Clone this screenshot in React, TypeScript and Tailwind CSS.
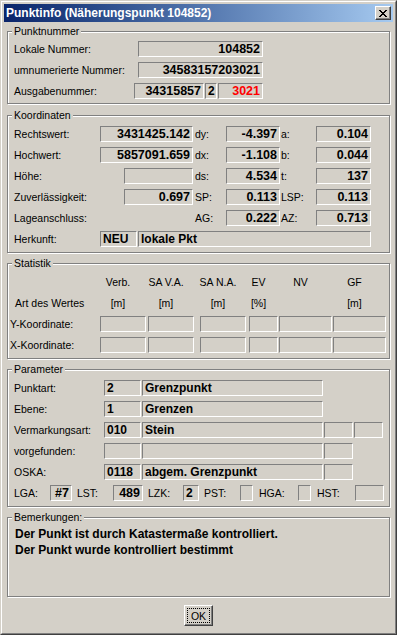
import type { ReactNode } from "react"

const sunken = "border border-t-[#808080] border-l-[#808080] border-r-white border-b-white"

const Field = ({
  className = "",
  children,
  right = false,
  red = false,
}: {
  className?: string
  children?: ReactNode
  right?: boolean
  red?: boolean
}) => (
  <div
    className={`flex h-[16px] shrink-0 items-center overflow-hidden whitespace-nowrap font-bold leading-[14px] ${sunken} ${
      right ? "justify-end pr-[2px] text-[12.5px]" : "pl-[2px] text-[12px]"
    } ${red ? "text-[#ff0000]" : "text-black"} ${className}`}
  >
    {children}
  </div>
)

const Label = ({ className = "", children }: { className?: string; children?: ReactNode }) => (
  <span className={`shrink-0 whitespace-nowrap leading-[14px] ${className}`}>{children}</span>
)

const Row = ({ children }: { children: ReactNode }) => <div className="flex h-[16px] items-center">{children}</div>

const Group = ({ title, className, children }: { title: string; className: string; children?: ReactNode }) => (
  <div
    className={`relative ml-[3px] w-[383px] shrink-0 border border-[#808080] shadow-[inset_1px_1px_0_#fff,1px_1px_0_#fff] ${className}`}
  >
    <span className="absolute left-[4px] top-[-7px] bg-[#d4d0c8] px-[2px] leading-[13px]">{title}</span>
    {children}
  </div>
)

const CloseGlyph = () => (
  <svg width="8" height="7" viewBox="0 0 8 7" shapeRendering="crispEdges">
    {[
      [0, 6],
      [1, 5],
      [2, 4],
      [3, 3],
      [2, 4],
      [1, 5],
      [0, 6],
    ].map(([a, b], y) => (
      <g key={y}>
        <rect x={a} y={y} width="2" height="1" fill="#000" />
        <rect x={b} y={y} width="2" height="1" fill="#000" />
      </g>
    ))}
  </svg>
)

const statCols = ["w-[46px]", "ml-[2px] w-[46px]", "ml-[6px] w-[46px]", "ml-[3px] w-[29px]", "ml-[1px] w-[53px]", "ml-[1px] w-[53px]"]

export default function App() {
  return (
    <div className="h-[635px] w-[397px] border border-t-[#d4d0c8] border-l-[#d4d0c8] border-r-[#404040] border-b-[#404040] bg-[#d4d0c8] font-['Liberation_Sans',Arial,sans-serif] text-[10.5px] text-black">
      <div className="flex h-full flex-col border border-t-white border-l-white border-r-[#808080] border-b-[#808080] p-[2px]">
        {/* title bar */}
        <div className="flex h-[18px] shrink-0 items-center bg-linear-to-r from-[#0a246a] to-[#a6caf0] pl-[2px] pr-[2px]">
          <span className="flex-1 whitespace-nowrap text-[12px] font-bold leading-[16px] text-white">
            Punktinfo (Näherungspunkt 104852)
          </span>
          <div className="flex h-[14px] w-[16px] items-center justify-center border border-t-white border-l-white border-r-[#404040] border-b-[#404040] bg-[#d4d0c8] shadow-[inset_-1px_-1px_0_#808080]">
            <CloseGlyph />
          </div>
        </div>

        <Group title="Punktnummer" className="mt-[9px] h-[73px] pl-[6px] pt-[9px]">
          <div className="flex flex-col gap-[5px]">
            <Row>
              <Label className="w-[124px]">Lokale Nummer:</Label>
              <Field className="w-[125px]" right>104852</Field>
            </Row>
            <Row>
              <Label className="w-[124px]">umnumerierte Nummer:</Label>
              <Field className="w-[125px]" right>34583157203021</Field>
            </Row>
            <Row>
              <Label className="w-[120px]">Ausgabenummer:</Label>
              <Field className="w-[70px]" right>34315857</Field>
              <Field className="ml-[1px] w-[12px]">2</Field>
              <Field className="ml-[1px] w-[45px]" right red>3021</Field>
            </Row>
          </div>
        </Group>

        <Group title="Koordinaten" className="mt-[11px] h-[138px] pl-[6px] pt-[10px]">
          <div className="flex flex-col gap-[5px]">
            {[
              ["Rechtswert:", "3431425.142", "w-[86px]", "w-[93px]", "dy:", "-4.397", "a:", "0.104"],
              ["Hochwert:", "5857091.659", "w-[86px]", "w-[93px]", "dx:", "-1.108", "b:", "0.044"],
              ["Höhe:", "", "w-[110px]", "w-[69px]", "ds:", "4.534", "t:", "137"],
              ["Zuverlässigkeit:", "0.697", "w-[110px]", "w-[69px]", "SP:", "0.113", "LSP:", "0.113"],
              ["Lageanschluss:", null, "w-[179px]", "", "AG:", "0.222", "AZ:", "0.713"],
            ].map(([l, v, lw, fw, l2, v2, l3, v3]) => (
              <Row key={l as string}>
                <Label className={lw as string}>{l}</Label>
                {v !== null && (
                  <Field className={fw as string} right>
                    {v}
                  </Field>
                )}
                <Label className="w-[33px] pl-[2px]">{l2}</Label>
                <Field className="w-[54px]" right>{v2}</Field>
                <Label className="w-[36px] pl-[1px]">{l3}</Label>
                <Field className="w-[55px]" right>{v3}</Field>
              </Row>
            ))}
            <Row>
              <Label className="w-[86px]">Herkunft:</Label>
              <Field className="w-[37px]">NEU</Field>
              <Field className="ml-[1px] w-[233px]">lokale Pkt</Field>
            </Row>
          </div>
        </Group>

        <Group title="Statistik" className="mt-[10px] h-[96px] pl-[6px] pt-[10px]">
          <div className="flex flex-col gap-[5px]">
            <Row>
              <span className="w-[81px] shrink-0" />
              {["Verb.", "SA V.A.", "SA N.A.", "EV", "NV", "GF"].map((h, i) => (
                <span key={h} className={`shrink-0 whitespace-nowrap text-center leading-[14px] ${statCols[i]}`}>
                  {h}
                </span>
              ))}
            </Row>
            <Row>
              <Label className="w-[81px] pl-[1px]">Art des Wertes</Label>
              {["[m]", "[m]", "[m]", "[%]", "", "[m]"].map((h, i) => (
                <span key={i} className={`shrink-0 whitespace-nowrap text-center leading-[14px] ${statCols[i]}`}>
                  {h}
                </span>
              ))}
            </Row>
            {["Y-Koordinate:", "X-Koordinate:"].map((l) => (
              <Row key={l}>
                <Label className="ml-[-4px] w-[90px]">{l}</Label>
                {statCols.map((c, i) => (
                  <Field key={i} className={c} />
                ))}
              </Row>
            ))}
          </div>
        </Group>

        <Group title="Parameter" className="mt-[10px] h-[138px] pl-[6px] pt-[10px]">
          <div className="flex flex-col gap-[5px]">
            <Row>
              <Label className="w-[90px]">Punktart:</Label>
              <Field className="w-[37px]">2</Field>
              <Field className="ml-[1px] w-[181px]">Grenzpunkt</Field>
            </Row>
            <Row>
              <Label className="w-[90px]">Ebene:</Label>
              <Field className="w-[37px]">1</Field>
              <Field className="ml-[1px] w-[181px]">Grenzen</Field>
            </Row>
            <Row>
              <Label className="w-[90px]">Vermarkungsart:</Label>
              <Field className="w-[37px]">010</Field>
              <Field className="ml-[1px] w-[181px]">Stein</Field>
              <Field className="ml-[1px] w-[29px]" />
              <Field className="ml-[1px] w-[29px]" />
            </Row>
            <Row>
              <Label className="w-[90px]">vorgefunden:</Label>
              <Field className="w-[37px]" />
              <Field className="ml-[1px] w-[181px]" />
              <Field className="ml-[1px] w-[29px]" />
            </Row>
            <Row>
              <Label className="w-[90px]">OSKA:</Label>
              <Field className="w-[37px]">0118</Field>
              <Field className="ml-[1px] w-[181px]">abgem. Grenzpunkt</Field>
              <Field className="ml-[1px] w-[29px]" />
            </Row>
            <Row>
              <Label className="w-[36px]">LGA:</Label>
              <Field className="w-[22px]" right>#7</Field>
              <Label className="w-[41px] pl-[5px]">LST:</Label>
              <Field className="w-[30px]" right>489</Field>
              <Label className="w-[40px] pl-[5px]">LZK:</Label>
              <Field className="w-[16px]">2</Field>
              <Label className="w-[41px] pl-[5px]">PST:</Label>
              <Field className="w-[13px]" />
              <Label className="w-[45px] pl-[6px]">HGA:</Label>
              <Field className="w-[13px]" />
              <Label className="w-[44px] pl-[6px]">HST:</Label>
              <Field className="w-[29px]" />
            </Row>
          </div>
        </Group>

        <Group title="Bemerkungen:" className="mt-[10px] h-[80px] pl-[7px] pt-[8px]">
          <p className="text-[12px] font-bold leading-[16px]">Der Punkt ist durch Katastermaße kontrolliert.</p>
          <p className="text-[12px] font-bold leading-[16px]">Der Punkt wurde kontrolliert bestimmt</p>
        </Group>

        <button
          type="button"
          className="mx-auto mt-[8px] flex h-[21px] w-[29px] shrink-0 border border-t-white border-l-white border-r-[#404040] border-b-[#404040] bg-[#d4d0c8] p-[1px] shadow-[inset_-1px_-1px_0_#808080]"
        >
          <span className="m-[1px] flex flex-1 items-center justify-center border border-dotted border-black text-[10.5px] leading-[12px]">
            OK
          </span>
        </button>
      </div>
    </div>
  )
}
